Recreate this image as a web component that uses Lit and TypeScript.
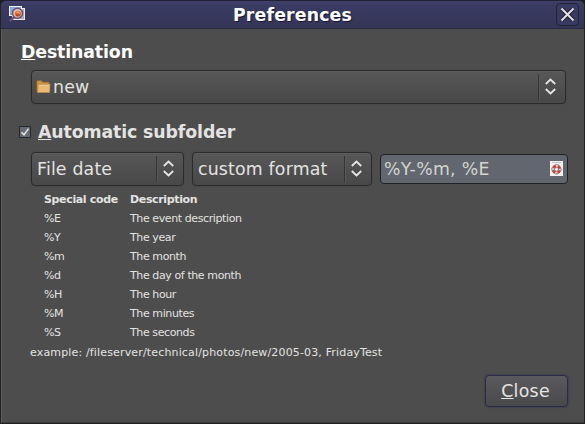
import { LitElement, html, css, svg } from "lit";
import { customElement, property } from "lit/decorators.js";

const CODES: [string, string][] = [
  ["%E", "The event description"],
  ["%Y", "The year"],
  ["%m", "The month"],
  ["%d", "The day of the month"],
  ["%H", "The hour"],
  ["%M", "The minutes"],
  ["%S", "The seconds"],
];

const folderIcon = html`<svg width="15" height="14" viewBox="0 0 15 14">
  <path d="M1 11.5V1.5Q1 .8 1.7.8H5.3L6.8 2.3H12.3Q13 2.3 13 3V12H1.5Z" fill="#cf9440" stroke="#a87635" stroke-width=".8"/>
  <path d="M2.2 4.3H14.1L13.6 12.5H1.6Z" fill="#e9bb76" stroke="#bd8a48" stroke-width=".8"/>
  <path d="M3 5.3H13" stroke="#f6d297" stroke-width=".8"/>
</svg>`;

const viewerIcon = html`<svg width="18" height="16" viewBox="0 0 18 16">
  <rect x="3.5" y="2.5" width="12" height="11" fill="#9dabc5" stroke="#eeeae4"/>
  <rect x=".5" y=".5" width="12" height="9" fill="#87a8df" stroke="#f4f1ea"/>
  <path d="M5.3 10.8L1 15" stroke="#71517c" stroke-width="2.4"/>
  <circle cx="8.5" cy="7.3" r="5" fill="#d3c6c0" stroke="#6e5168" stroke-width="1.5"/>
  <circle cx="9" cy="7.7" r="3" fill="#df5d25"/>
  <path d="M7.5 7.4L9 5.7L10.8 7.6" stroke="#f5a56e" stroke-width="1.2" fill="none"/>
  <path d="M7 9H10.5" stroke="#963816" stroke-width="1"/>
</svg>`;

const buoyIcon = html`<svg width="13" height="15" viewBox="0 0 13 15">
  <rect width="13" height="15" fill="#f3f3ef"/>
  <path d="M2 1.5H11" stroke="#c7c7c2"/>
  <circle cx="6.5" cy="8.3" r="3.5" fill="none" stroke="#d4d4d4" stroke-width="2.8"/>
  <circle cx="6.5" cy="8.3" r="3.5" fill="none" stroke="#dc3832" stroke-width="2.6" stroke-dasharray="3.2 2.3" stroke-dashoffset="-1.15"/>
  <circle cx="6.5" cy="8.3" r="4.8" fill="none" stroke="#6b6060" stroke-width=".7" stroke-dasharray="3 4.54" stroke-dashoffset="1.5"/>
  <circle cx="6.5" cy="8.3" r="2" fill="#f1f1ed" stroke="#625c5c" stroke-width=".8"/>
</svg>`;

@customElement("combo-box")
export class ComboBox extends LitElement {
  @property() label = "";
  @property({ type: Boolean }) folder = false;

  static styles = css`
    :host {
      display: flex;
      box-sizing: border-box;
      height: 34px;
      align-items: center;
      border: 1px solid #2b2b2b;
      border-radius: 4px;
      background: linear-gradient(#575757, #484848);
      box-shadow: inset 0 1px #5d5d5d, 0 0 1px #3a3a3a;
      color: #e3e3e1;
    }
    .label {
      flex: 1;
      line-height: 22px;
      padding-left: 5px;
      letter-spacing: 0.18px;
      white-space: pre;
    }
    .folder {
      flex: none;
      display: block;
      margin-left: 4px;
      height: 14px;
    }
    .folder svg {
      display: block;
    }
    .folder + .label {
      padding-left: 2px;
    }
    .rule {
      width: 1px;
      height: 26px;
      background: #353535;
      box-shadow: 1px 0 #575757;
    }
    .arrows {
      width: 26px;
      height: 18px;
    }
  `;

  render() {
    return html`
      ${this.folder ? html`<span class="folder">${folderIcon}</span>` : null}
      <span class="label">${this.label}</span>
      <span class="rule"></span>
      <svg class="arrows" viewBox="0 0 26 18">
        ${svg`<path d="M6.8 6L11.5 1.6L16.2 6M6.8 11L11.5 15.4L16.2 11" fill="none" stroke="#e6e6e4" stroke-width="1.8"/>`}
      </svg>
    `;
  }
}

@customElement("app-root")
export class AppRoot extends LitElement {
  static styles = css`
    :host {
      display: block;
      width: 585px;
      height: 424px;
      background: #1c1c20;
      overflow: hidden;
      font: 17.33px/22px "DejaVu Sans", sans-serif;
      color: #e3e3e1;
    }
    .window {
      box-sizing: border-box;
      display: flex;
      flex-direction: column;
      height: 424px;
      border: 1px solid #232323;
      border-top-color: #202034;
      border-radius: 6px 6px 0 0;
      background: #4d4d4d;
      overflow: hidden;
    }
    .titlebar {
      display: flex;
      flex: none;
      align-items: center;
      box-sizing: border-box;
      height: 28px;
      padding: 0 5px 0 8px;
      border-bottom: 1px solid #292941;
      background: linear-gradient(#40406a, #3a3b62 15%, #343557);
    }
    .titlebar .app {
      width: 30px;
      height: 16px;
      padding-bottom: 2px;
    }
    .titlebar .app svg {
      display: block;
    }
    .title {
      flex: 1;
      margin: 0;
      padding-right: 10px;
      font-size: 17.33px;
      font-weight: bold;
      text-align: center;
      color: #fff;
      letter-spacing: 0.16px;
      text-shadow: 1px 1px 1px #191930;
    }
    .x {
      box-sizing: border-box;
      width: 23px;
      height: 23px;
      padding: 0;
      border: 1px solid #222237;
      border-radius: 4px;
      background: #393a5f;
    }
    .x svg {
      display: block;
    }
    .content {
      flex: 1;
      display: flex;
      flex-direction: column;
      padding: 12px 16px 15px 20px;
      border-left: 1px solid #5c5c5c;
      border-bottom: 1px solid #3c3c3c;
    }
    .heading {
      margin: 0;
      font-size: 17.33px;
      font-weight: bold;
      line-height: 22px;
    }
    .dest {
      color: #fff;
      margin-left: -1px;
      letter-spacing: -0.12px;
    }
    u {
      text-decoration-thickness: 1px;
      text-underline-offset: 1px;
      text-decoration-skip-ink: none;
    }
    .destination {
      margin: 7px 2px 0 9px;
    }
    .toggle {
      display: flex;
      align-items: center;
      gap: 7px;
      margin: 17px 0 0 -3px;
    }
    .toggle .heading {
      letter-spacing: -0.11px;
    }
    .box {
      display: block;
      box-sizing: border-box;
      width: 12px;
      height: 12px;
      border: 1px solid #24282e;
      border-radius: 1px;
      background: #646b75;
    }
    .box svg {
      display: block;
    }
    .formats {
      display: flex;
      align-items: center;
      margin: 9px 0 0 9px;
      gap: 8px;
    }
    .kind {
      width: 153px;
    }
    .format {
      width: 180px;
    }
    .entry {
      display: flex;
      box-sizing: border-box;
      flex: 1;
      height: 30px;
      align-items: center;
      justify-content: space-between;
      padding: 0 4px 1px 3px;
      border: 1px solid #202124;
      border-radius: 4px;
      background: #62666e;
      color: #d2d5cf;
      letter-spacing: 0.3px;
    }
    .entry svg {
      display: block;
    }
    .codes {
      display: grid;
      grid-template-columns: 86px 1fr;
      grid-auto-rows: 19px;
      margin: 4px 0 0 22px;
      font-size: 11px;
      line-height: 19px;
      letter-spacing: -0.4px;
    }
    .codes b {
      letter-spacing: -0.35px;
    }
    .example {
      margin: 1px 0 0 8px;
      font-size: 11px;
      line-height: 19px;
      letter-spacing: 0.155px;
      white-space: nowrap;
    }
    .close {
      box-sizing: border-box;
      align-self: flex-end;
      width: 83px;
      height: 32px;
      margin-top: auto;
      padding: 0 2px 0 0;
      border: 1px solid #292b48;
      border-radius: 4px;
      background: linear-gradient(#5a5a5e, #49494b);
      box-shadow: 0 0 2px #292b48;
      font: inherit;
      color: #e6e6e4;
      letter-spacing: 0.3px;
    }
  `;

  render() {
    return html`
      <div class="window">
        <header class="titlebar">
          <span class="app">${viewerIcon}</span>
          <h1 class="title">Preferences</h1>
          <button class="x" aria-label="Close window">
            <svg width="21" height="21" viewBox="0 0 21 21">
              <path d="M5 5L16 16M16 5L5 16" stroke="#1d1e34" stroke-width="4" />
              <path d="M4.5 4.5L16.5 16.5M16.5 4.5L4.5 16.5" stroke="#e0e0e6" stroke-width="2" />
            </svg>
          </button>
        </header>
        <main class="content">
          <h2 class="heading dest"><u>D</u>estination</h2>
          <combo-box class="destination" label="new" folder></combo-box>
          <div class="toggle">
            <span class="box" role="checkbox" aria-checked="true">
              <svg width="10" height="10" viewBox="0 0 10 10">
                <path d="M1.5 5.2L4 7.8L8.5 1.6" fill="none" stroke="#e2e5dc" stroke-width="1.5" />
              </svg>
            </span>
            <h2 class="heading"><u>A</u>utomatic subfolder</h2>
          </div>
          <div class="formats">
            <combo-box class="kind" label="File date"></combo-box>
            <combo-box class="format" label="custom format"></combo-box>
            <div class="entry"><span>%Y-%m, %E</span>${buoyIcon}</div>
          </div>
          <div class="codes">
            <b>Special code</b><b>Description</b>
            ${CODES.map(([code, text]) => html`<span>${code}</span><span>${text}</span>`)}
          </div>
          <div class="example">example: /fileserver/technical/photos/new/2005-03, FridayTest</div>
          <button class="close"><u>C</u>lose</button>
        </main>
      </div>
    `;
  }
}
